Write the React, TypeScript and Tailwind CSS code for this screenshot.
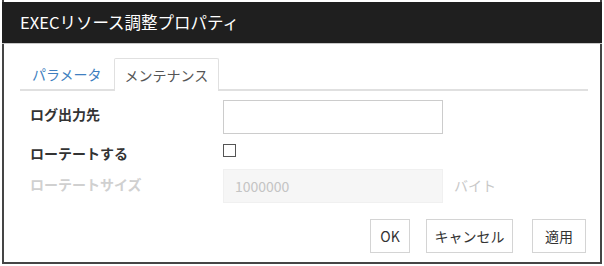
import React from 'react';

const font = { fontFamily: '"Noto Sans CJK JP", "Noto Sans", sans-serif' };

export default function App() {
  return (
    <div className="w-[604px] h-[266px] bg-white relative overflow-hidden" style={font}>
      <div className="ml-[2px] w-[600px] h-[264px] flex flex-col border-x-2 border-b-2 border-[#454545]">
        {/* Header */}
        <div className="h-[42px] mt-[2px] -mx-[2px] bg-[#1f1f1f] border-b border-[#c8c8c8] flex items-center pl-[18px]">
          <span className="text-white text-[16.5px] leading-none">EXECリソース調整プロパティ</span>
        </div>

        {/* Tabs */}
        <div className="mt-[14px] ml-[16px] mr-[12px] flex items-end border-b-2 border-[#e0e0e0] h-[33px]">
          <button className="h-[31px] px-[12px] text-[14px] leading-none text-[#3f7fc0]">パラメータ</button>
          <div className="h-[33px] -mb-[2px] px-[10px] bg-white border border-b-0 border-[#e0e0e0] rounded-t-[2px] flex items-center text-[14px] leading-none text-[#555]">
            メンテナンス
          </div>
        </div>

        {/* Form */}
        <div className="ml-[26px] mt-[9px] flex flex-col">
          <div className="flex items-start h-[34px]">
            <label className="w-[193px] pt-[7px] text-[14px] font-bold text-[#333] leading-none">ログ出力先</label>
            <input type="text" className="w-[220px] h-[34px] border border-[#ccc] bg-white outline-none" />
          </div>
          <div className="flex items-start h-[16px] mt-[10px]">
            <label className="w-[193px] pt-[2px] text-[14px] font-bold text-[#333] leading-none">ローテートする</label>
            <span className="w-[13px] h-[13px] mt-[0px] border border-[#555] bg-white" />
          </div>
          <div className="flex items-start h-[34px] mt-[9px]">
            <label className="w-[193px] pt-[8px] text-[14px] font-bold text-[#d0d0d0] leading-none">ローテートサイズ</label>
            <input
              type="text"
              disabled
              value="1000000"
              readOnly
              className="w-[220px] h-[34px] border border-[#f0f0f0] bg-[#f6f6f6] px-[11px] text-[14px] text-[#c4c4c4]"
            />
            <span className="ml-[11px] pt-[9px] text-[14px] text-[#c8c8c8] leading-none">バイト</span>
          </div>
        </div>

        {/* Footer */}
        <div className="mt-[16px] mr-[14px] flex justify-end">
          <button className="w-[40px] h-[34px] border border-[#d4d4d4] bg-white text-[14px] text-[#333]">OK</button>
          <button className="ml-[16px] w-[87px] h-[34px] border border-[#d4d4d4] bg-white text-[14px] text-[#333]">キャンセル</button>
          <button className="ml-[19px] w-[54px] h-[34px] border border-[#d4d4d4] bg-white text-[14px] text-[#333]">適用</button>
        </div>
      </div>
    </div>
  );
}
